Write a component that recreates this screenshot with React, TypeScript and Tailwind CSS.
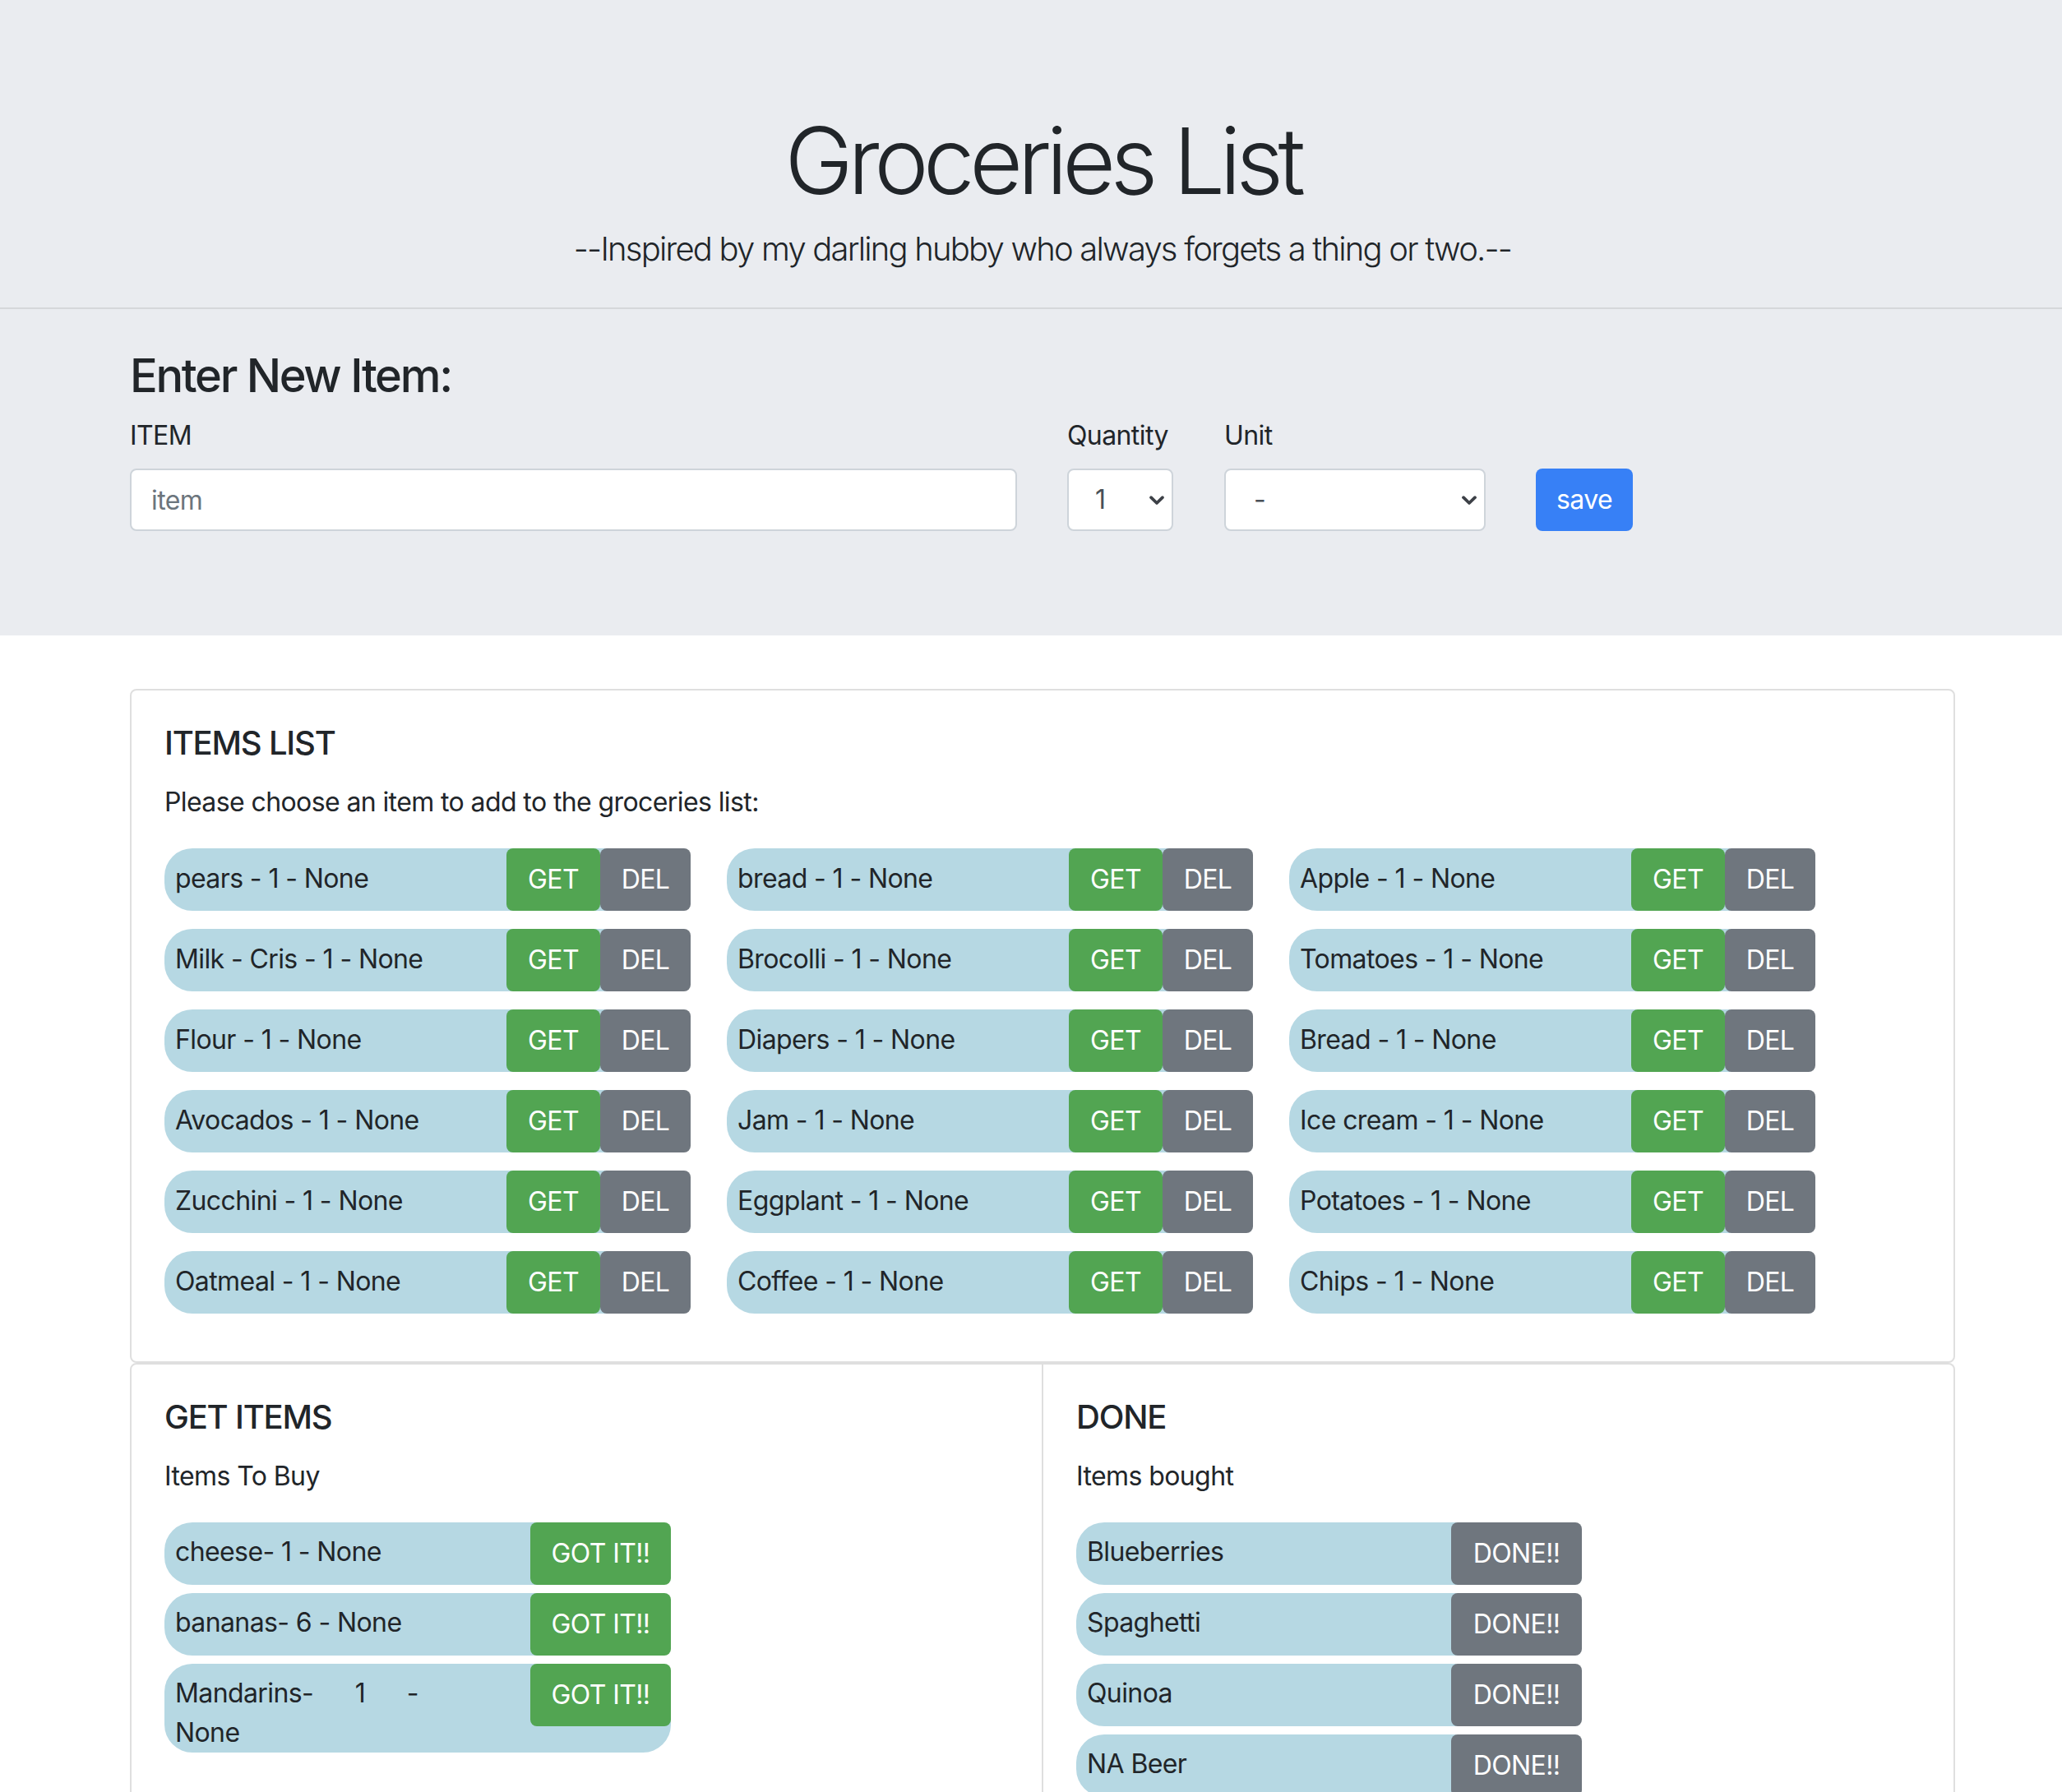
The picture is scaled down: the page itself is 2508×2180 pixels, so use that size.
import React from "react";

const grid: string[] = [
  "pears - 1 - None",
  "bread - 1 - None",
  "Apple - 1 - None",
  "Milk - Cris - 1 - None",
  "Brocolli - 1 - None",
  "Tomatoes - 1 - None",
  "Flour - 1 - None",
  "Diapers - 1 - None",
  "Bread - 1 - None",
  "Avocados - 1 - None",
  "Jam - 1 - None",
  "Ice cream - 1 - None",
  "Zucchini - 1 - None",
  "Eggplant - 1 - None",
  "Potatoes - 1 - None",
  "Oatmeal - 1 - None",
  "Coffee - 1 - None",
  "Chips - 1 - None",
];

const done = ["Blueberries", "Spaghetti", "Quinoa", "NA Beer"];

function Chevron() {
  return (
    <svg width="20" height="13" viewBox="0 0 20 13" className="shrink-0">
      <path
        d="M3 3.2 L10 10 L17 3.2"
        fill="none"
        stroke="#3d4147"
        strokeWidth="3.8"
        strokeLinecap="round"
        strokeLinejoin="round"
      />
    </svg>
  );
}

function GridItem({ text }: { text: string }) {
  return (
    <div className="flex h-[76px] w-[640px] rounded-[34px] bg-[#b6d8e3]">
      <div className="flex-1 pl-[13px] pt-[13px] text-[32px] leading-[48px] whitespace-nowrap">{text}</div>
      <div className="flex">
        <button className="flex h-[76px] w-[114px] items-center justify-center rounded-[8px] bg-[#52a552] text-[32px] text-white">
          GET
        </button>
        <button className="flex h-[76px] w-[110px] items-center justify-center rounded-[8px] bg-[#6f767e] text-[32px] text-white">
          DEL
        </button>
      </div>
    </div>
  );
}

export default function App() {
  return (
    <div className="min-h-screen bg-white font-['Inter','Noto_Sans',sans-serif] text-[#212529] tracking-[-0.6px]">
      <header className="h-[376px] border-b-2 border-[#d5d7da] bg-[#eaecf0] pt-[128px]">
        <div className="ml-[158px] w-[2220px] text-center">
          <h1 className="text-[112px] font-light leading-[1.2] tracking-[-6.5px]">Groceries List</h1>
          <p className="mt-[11px] text-[40px] font-light leading-[1.5] tracking-[-1.8px]">
            --Inspired by my darling hubby who always forgets a thing or two.--
          </p>
        </div>
      </header>

      <section className="h-[397px] bg-[#eaecf0] pt-[48px]">
        <div className="ml-[158px] w-[2220px]">
          <h3 className="mb-[15px] text-[56px] font-medium leading-[1.2] tracking-[-2.3px]">Enter New Item:</h3>
          <div className="flex items-end">
            <div className="w-[1079px]">
              <label className="mb-[16px] block text-[32px] leading-[48px]">ITEM</label>
              <input
                placeholder="item"
                className="block h-[76px] w-full rounded-[8px] border-2 border-[#ced4da] bg-white px-[24px] text-[32px] text-[#495057] outline-none placeholder:text-[#6c757d]"
              />
            </div>
            <div className="ml-[61px] w-[129px]">
              <div className="mb-[16px] text-[32px] leading-[48px]">Quantity</div>
              <div className="flex h-[76px] items-center justify-between rounded-[8px] border-2 border-[#ced4da] bg-white pl-[32px] pr-[8px] text-[32px] text-[#495057]">
                <span>1</span>
                <Chevron />
              </div>
            </div>
            <div className="ml-[62px] w-[318px]">
              <div className="mb-[16px] text-[32px] leading-[48px]">Unit</div>
              <div className="flex h-[76px] items-center justify-between rounded-[8px] border-2 border-[#ced4da] bg-white pl-[34px] pr-[8px] text-[32px] text-[#495057]">
                <span>-</span>
                <Chevron />
              </div>
            </div>
            <button className="ml-[61px] flex h-[76px] w-[118px] items-center justify-center rounded-[8px] bg-[#3780f6] text-[32px] text-white">
              save
            </button>
          </div>
        </div>
      </section>

      <main className="ml-[158px] w-[2220px] pt-[65px]">
        <div className="h-[820px] rounded-[8px] border-2 border-[#dfdfdf] p-[40px]">
          <h5 className="mb-[24px] text-[40px] font-medium leading-[1.2] tracking-[-1.2px]">ITEMS LIST</h5>
          <p className="mb-[32px] text-[32px] leading-[48px]">Please choose an item to add to the groceries list:</p>
          <div className="grid grid-cols-[640px_640px_640px] gap-x-[44px] gap-y-[22px]">
            {grid.map((t) => (
              <GridItem key={t} text={t} />
            ))}
          </div>
        </div>

        <div className="flex">
          <div className="h-[640px] w-[1111px] rounded-bl-[8px] rounded-tl-[8px] border-2 border-[#dfdfdf] p-[40px]">
            <h5 className="mb-[24px] text-[40px] font-medium leading-[1.2] tracking-[-1.2px]">GET ITEMS</h5>
            <p className="mb-[32px] text-[32px] leading-[48px]">Items To Buy</p>
            <div className="flex flex-col gap-[10px]">
              <div className="flex min-h-[76px] w-[616px] rounded-[34px] bg-[#b6d8e3]">
                <div className="flex-1 pl-[13px] pt-[12px] text-[32px] leading-[48px]">cheese- 1 - None</div>
                <button className="flex h-[76px] w-[171px] items-center justify-center rounded-[8px] bg-[#52a552] text-[32px] text-white">
                  GOT IT!!
                </button>
              </div>
              <div className="flex min-h-[76px] w-[616px] rounded-[34px] bg-[#b6d8e3]">
                <div className="flex-1 pl-[13px] pt-[12px] text-[32px] leading-[48px]">bananas- 6 - None</div>
                <button className="flex h-[76px] w-[171px] items-center justify-center rounded-[8px] bg-[#52a552] text-[32px] text-white">
                  GOT IT!!
                </button>
              </div>
              <div className="flex min-h-[76px] w-[616px] rounded-[34px] bg-[#b6d8e3]">
                <div className="flex-1 pl-[13px] pt-[12px] text-[32px] leading-[48px]">
                  <span className="block w-[296px] text-justify">Mandarins- 1 - None</span>
                </div>
                <button className="flex h-[76px] w-[171px] items-center justify-center self-start rounded-[8px] bg-[#52a552] text-[32px] text-white">
                  GOT IT!!
                </button>
              </div>
            </div>
          </div>
          <div className="h-[640px] w-[1109px] rounded-br-[8px] rounded-tr-[8px] border-2 border-l-0 border-[#dfdfdf] p-[40px]">
            <h5 className="mb-[24px] text-[40px] font-medium leading-[1.2] tracking-[-1.2px]">DONE</h5>
            <p className="mb-[32px] text-[32px] leading-[48px]">Items bought</p>
            <div className="flex flex-col gap-[10px]">
              {done.map((d) => (
                <div key={d} className="flex min-h-[76px] w-[615px] rounded-[34px] bg-[#b6d8e3]">
                  <div className="flex-1 pl-[13px] pt-[12px] text-[32px] leading-[48px]">{d}</div>
                  <button className="flex h-[76px] w-[159px] items-center justify-center rounded-[8px] bg-[#6f767e] text-[32px] text-white">
                    DONE!!
                  </button>
                </div>
              ))}
            </div>
          </div>
        </div>
      </main>
    </div>
  );
}
